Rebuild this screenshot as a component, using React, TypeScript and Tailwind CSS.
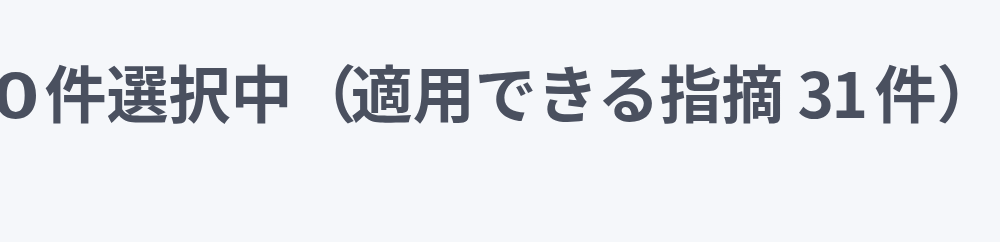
export default function App() {
  return (
    <div className="w-[1000px] h-[242px] bg-[#f5f7fa] overflow-hidden flex items-center">
      <p
        className="-mt-[60px] whitespace-nowrap text-[62px] font-bold leading-none text-[#4a505f]"
        style={{ fontFamily: '"Noto Sans CJK JP", "Noto Sans", sans-serif' }}
      >
        <span className="inline-block -ml-[8px] mr-[16px] origin-left scale-x-[1.3]">0</span>件選択中
        <span className="ml-[2px] -mr-[6px]">（</span>適用できる指摘
        <span className="ml-[14px] mr-[9px] tracking-[-0.04em]">31</span>
        <span>件</span>
        <span className="inline-block w-[40px]">）</span>
      </p>
    </div>
  );
}
